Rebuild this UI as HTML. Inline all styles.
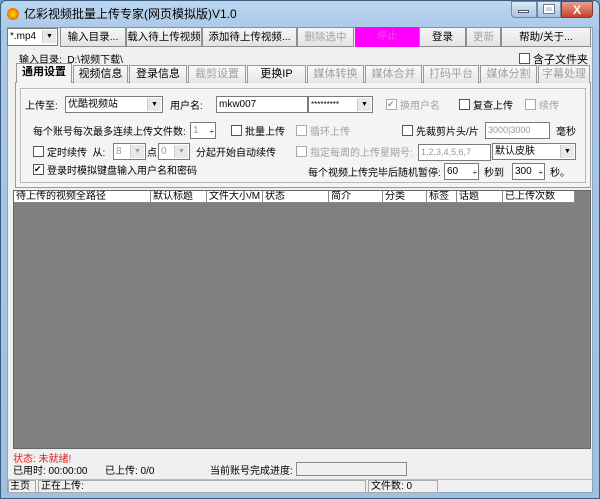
<!DOCTYPE html><html><head><meta charset="utf-8"><style>
*{box-sizing:border-box;margin:0;padding:0}
body{width:600px;height:499px;overflow:hidden;background:#6fa0cf;font-family:"Liberation Sans","Noto Sans CJK SC",sans-serif;font-size:10px;color:#000;position:relative}
.a{position:absolute;white-space:nowrap}
.frame{left:0;top:0;width:600px;height:499px;background:linear-gradient(#bcd6ef,#a9c8e8 30px,#9fc0e3);border:1px solid #3b5b80;border-radius:6px 6px 0 0}
.client{left:7px;top:27px;width:586px;height:466px;background:#f0f0f0;border:1px solid #8aa4c0}
.btn{background:linear-gradient(#f6f6f6,#e3e3e3);border:1px solid #8e8e8e;text-align:center;line-height:18px;height:20px;font-size:10.5px;overflow:hidden}
.dis{color:#a0a0a0}
.tab{height:18px;border:1px solid #999;border-bottom:none;background:linear-gradient(#fafafa,#e6e6e6);text-align:center;line-height:17px;font-size:11px}
.inp{background:#fff;border:1px solid #7a7a7a;height:17px;line-height:15px;padding-left:2px}
.cb{width:11px;height:11px;border:1px solid #555;background:#fff}
.dd{position:absolute;right:1px;top:1px;width:14px;height:13px;background:#e8e8e8;border-left:1px solid #ccc;font-size:7px;text-align:center;line-height:13px}
.hd{top:191px;height:12px;background:#fff;border-right:1px solid #888;border-bottom:1px solid #888;line-height:11px;padding-left:2px;font-size:10px;overflow:hidden}
</style></head><body>
<div class="a frame"></div>
<div class="a" style="left:7px;top:8px;width:12px;height:12px;border-radius:6px;background:radial-gradient(#ffe000,#e04000)"></div>
<div class="a" style="left:24px;top:5px;font-size:12px">亿彩视频批量上传专家(网页模拟版)V1.0</div>
<div class="a" style="left:511px;top:1px;width:26px;height:17px;background:linear-gradient(#dce9f7,#a8c3e3);border:1px solid #6d88ab;border-radius:0 0 0 4px"></div>
<div class="a" style="left:518px;top:10px;width:11px;height:3px;background:#fff;border:1px solid #556"></div>
<div class="a" style="left:537px;top:1px;width:24px;height:17px;background:linear-gradient(#dce9f7,#a8c3e3);border:1px solid #6d88ab"></div>
<div class="a" style="left:544px;top:5px;width:10px;height:8px;border:2px solid #fff;outline:1px solid #778"></div>
<div class="a" style="left:561px;top:1px;width:32px;height:17px;background:linear-gradient(#e8a090,#c8412c);border:1px solid #7a3b30;border-radius:0 0 4px 0;color:#fff;text-align:center;font-weight:bold;font-size:12px;line-height:16px">X</div>
<div class="a client"></div>
<!-- toolbar -->
<div class="a inp" style="left:7px;top:28px;width:51px;height:18px">*.mp4<div class="dd">▼</div></div>
<div class="a btn" style="left:60px;top:27px;width:66px">输入目录...</div>
<div class="a btn" style="left:126px;top:27px;width:76px">载入待上传视频</div>
<div class="a btn" style="left:202px;top:27px;width:95px">添加待上传视频...</div>
<div class="a btn dis" style="left:297px;top:27px;width:57px">删除选中</div>
<div class="a" style="left:355px;top:27px;width:64px;height:20px;background:#ff00ff;color:#e050e0;text-align:center;line-height:19px">停止</div>
<div class="a btn" style="left:419px;top:27px;width:47px">登录</div>
<div class="a btn dis" style="left:466px;top:27px;width:35px">更新</div>
<div class="a btn" style="left:501px;top:27px;width:90px">帮助/关于...</div>
<div class="a" style="left:19px;top:51px">输入目录:&nbsp; D:\视频下载\</div>
<div class="a cb" style="left:519px;top:53px"></div>
<div class="a" style="left:533px;top:51px;font-size:11px">含子文件夹</div>
<!-- tabs -->
<div class="a" style="left:15px;top:82px;width:576px;height:106px;border:1px solid #999;background:#f4f4f4"></div>
<div class="a tab" style="left:16px;top:63px;width:56px;height:20px;font-weight:bold;background:#f4f4f4">通用设置</div>
<div class="a tab" style="left:73px;top:65px;width:55px">视频信息</div>
<div class="a tab" style="left:129px;top:65px;width:58px">登录信息</div>
<div class="a tab dis" style="left:188px;top:65px;width:58px">裁剪设置</div>
<div class="a tab" style="left:247px;top:65px;width:59px">更换IP</div>
<div class="a tab dis" style="left:307px;top:65px;width:57px">媒体转换</div>
<div class="a tab dis" style="left:365px;top:65px;width:57px">媒体合并</div>
<div class="a tab dis" style="left:423px;top:65px;width:56px">打码平台</div>
<div class="a tab dis" style="left:480px;top:65px;width:57px">媒体分割</div>
<div class="a tab dis" style="left:538px;top:65px;width:52px">字幕处理</div>
<div class="a" style="left:20px;top:88px;width:566px;height:95px;border:1px solid #b8b8b8;box-shadow:inset 1px 1px 0 #fff"></div>
<!-- row1 -->
<div class="a" style="left:25px;top:97px">上传至:</div>
<div class="a inp" style="left:65px;top:96px;width:98px">优酷视频站<div class="dd">▼</div></div>
<div class="a" style="left:170px;top:97px">用户名:</div>
<div class="a inp" style="left:216px;top:96px;width:92px">mkw007</div>
<div class="a inp" style="left:308px;top:96px;width:65px;font-size:8px">*********<div class="dd">▼</div></div>
<div class="a cb" style="left:386px;top:99px;border-color:#aaa;font-size:9px;line-height:9px;color:#999">✔</div>
<div class="a dis" style="left:400px;top:97px">换用户名</div>
<div class="a cb" style="left:459px;top:99px"></div>
<div class="a" style="left:473px;top:97px">复查上传</div>
<div class="a cb" style="left:525px;top:99px;border-color:#aaa"></div>
<div class="a dis" style="left:539px;top:97px">续传</div>
<!-- row2 -->
<div class="a" style="left:33px;top:123px">每个账号每次最多连续上传文件数:</div>
<div class="a inp" style="left:190px;top:122px;width:26px;color:#999">1<span style="position:absolute;right:1px;top:1px;font-size:8px;color:#000">÷</span></div>
<div class="a cb" style="left:231px;top:125px"></div>
<div class="a" style="left:245px;top:123px">批量上传</div>
<div class="a cb" style="left:296px;top:125px;border-color:#aaa"></div>
<div class="a dis" style="left:310px;top:123px">循环上传</div>
<div class="a cb" style="left:402px;top:125px"></div>
<div class="a" style="left:416px;top:123px">先裁剪片头/片</div>
<div class="a inp" style="left:485px;top:122px;width:65px;color:#999;font-size:9px">3000|3000</div>
<div class="a" style="left:556px;top:123px">毫秒</div>
<!-- row3 -->
<div class="a cb" style="left:33px;top:146px"></div>
<div class="a" style="left:47px;top:144px">定时续传&nbsp; 从:</div>
<div class="a inp" style="left:113px;top:143px;width:33px;color:#999">8<div class="dd">▼</div></div>
<div class="a" style="left:147px;top:144px">点</div>
<div class="a inp" style="left:158px;top:143px;width:32px;color:#999">0<div class="dd">▼</div></div>
<div class="a" style="left:196px;top:144px">分起开始自动续传</div>
<div class="a cb" style="left:296px;top:146px;border-color:#aaa"></div>
<div class="a dis" style="left:310px;top:144px">指定每周的上传星期号:</div>
<div class="a inp" style="left:418px;top:144px;width:73px;color:#999;font-size:9px">1,2,3,4,5,6,7</div>
<div class="a inp" style="left:492px;top:143px;width:84px">默认皮肤<div class="dd">▼</div></div>
<!-- row4 -->
<div class="a cb" style="left:33px;top:164px;font-size:9px;line-height:9px">✔</div>
<div class="a" style="left:47px;top:162px">登录时模拟键盘输入用户名和密码</div>
<div class="a" style="left:308px;top:164px">每个视频上传完毕后随机暂停:</div>
<div class="a inp" style="left:444px;top:163px;width:35px">60<span style="position:absolute;right:1px;top:1px;font-size:8px">÷</span></div>
<div class="a" style="left:484px;top:164px">秒到</div>
<div class="a inp" style="left:512px;top:163px;width:33px">300<span style="position:absolute;right:1px;top:1px;font-size:8px">÷</span></div>
<div class="a" style="left:550px;top:164px">秒。</div>
<!-- list -->
<div class="a" style="left:13px;top:190px;width:578px;height:259px;background:#808080;border:1px solid #666"></div>
<div class="a hd" style="left:14px;width:137px">待上传的视频全路径</div>
<div class="a hd" style="left:151px;width:56px">默认标题</div>
<div class="a hd" style="left:207px;width:56px">文件大小/M</div>
<div class="a hd" style="left:263px;width:66px">状态</div>
<div class="a hd" style="left:329px;width:54px">简介</div>
<div class="a hd" style="left:383px;width:44px">分类</div>
<div class="a hd" style="left:427px;width:30px">标签</div>
<div class="a hd" style="left:457px;width:46px">话题</div>
<div class="a hd" style="left:503px;width:72px">已上传次数</div>
<!-- status -->
<div class="a" style="left:13px;top:450px;color:#e02020">状态: 未就绪!</div>
<div class="a" style="left:13px;top:462px">已用时: 00:00:00</div>
<div class="a" style="left:105px;top:462px">已上传: 0/0</div>
<div class="a" style="left:210px;top:462px">当前账号完成进度:</div>
<div class="a" style="left:296px;top:462px;width:111px;height:14px;border:1px solid #888;background:#f0f0f0"></div>
<div class="a" style="left:7px;top:479px;width:586px;height:14px;border-top:1px solid #bbb"></div>
<div class="a" style="left:8px;top:480px;width:28px;height:13px;border:1px solid #aaa;line-height:11px;padding-left:1px">主页</div>
<div class="a" style="left:38px;top:480px;width:328px;height:13px;border:1px solid #aaa;line-height:11px;padding-left:2px">正在上传:</div>
<div class="a" style="left:368px;top:480px;width:70px;height:13px;border:1px solid #aaa;line-height:11px;padding-left:2px">文件数: 0</div>
</body></html>
